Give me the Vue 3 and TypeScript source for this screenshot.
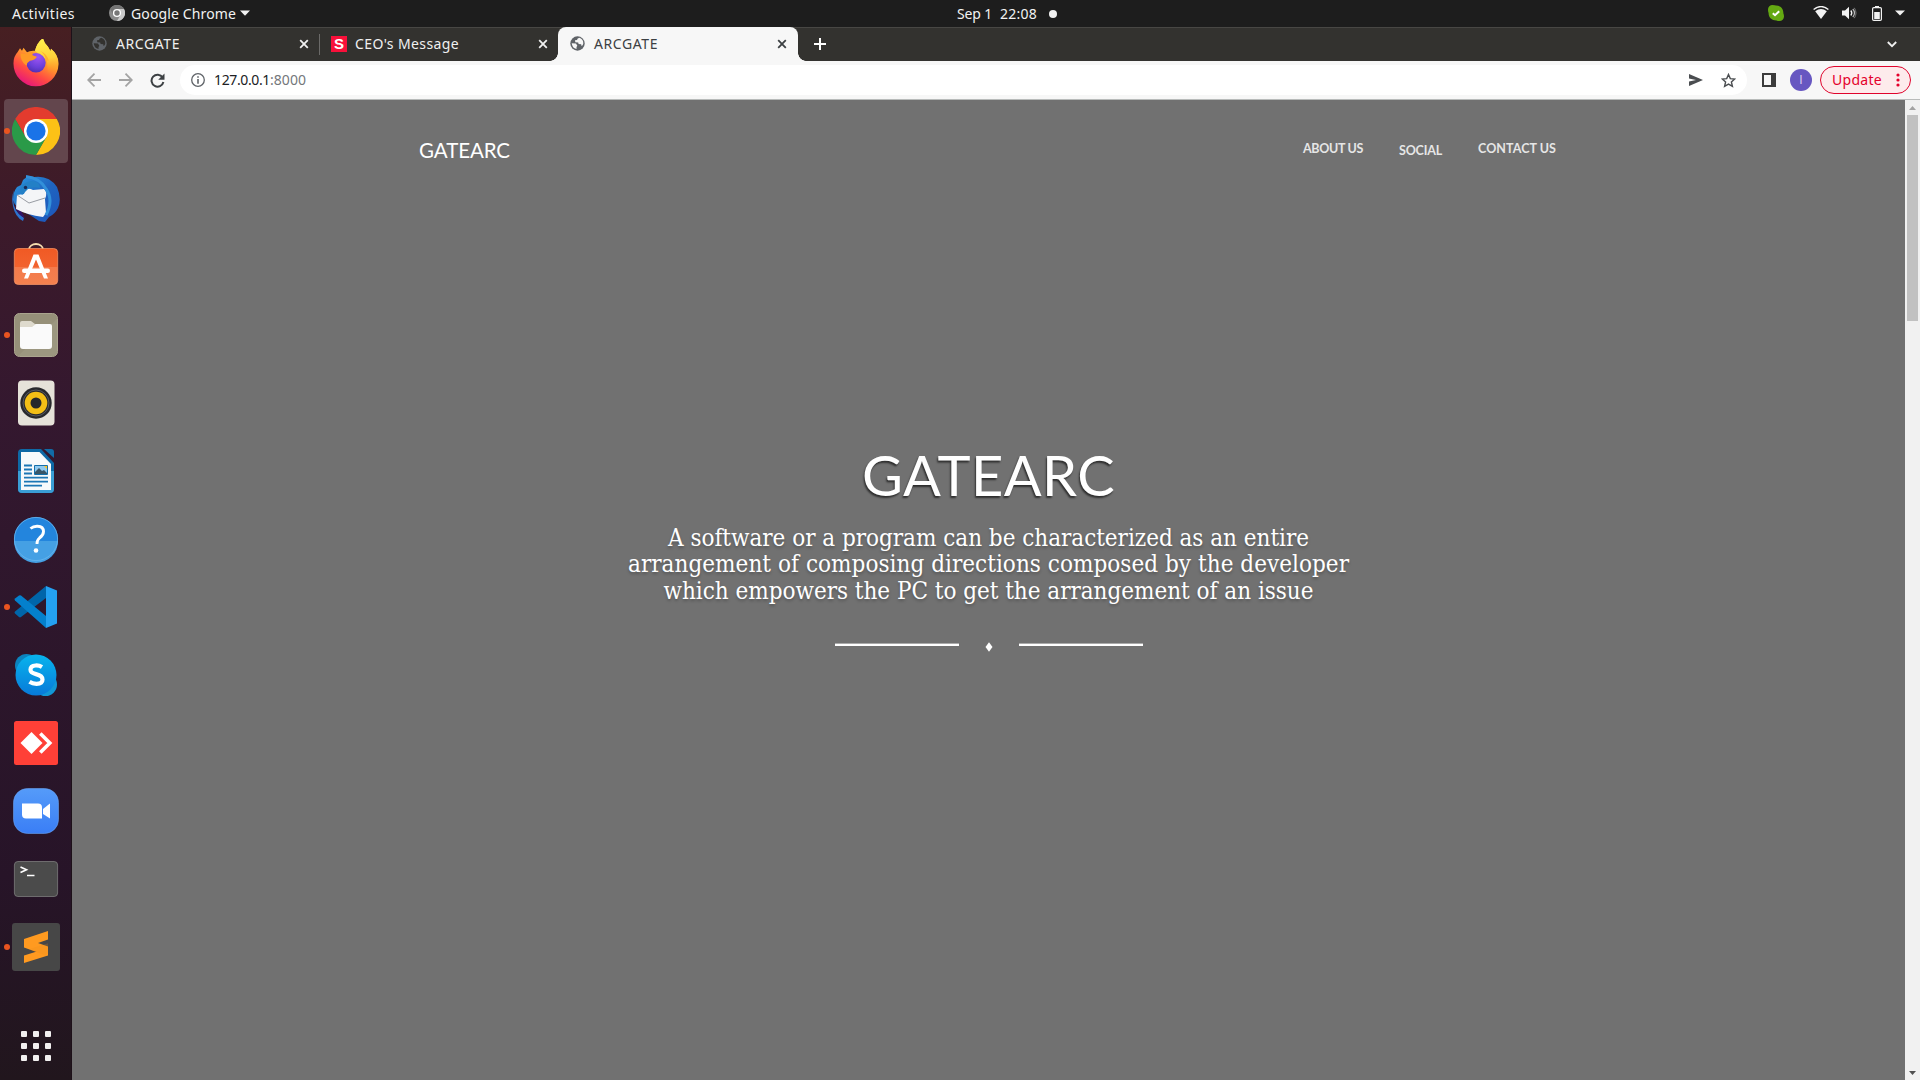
<script setup lang="ts">
import type { Directive } from 'vue'

interface Tab {
  title: string
  icon: 'globe' | 's'
  width: number
  titleWidth: number
  active?: boolean
}

const tabs: Tab[] = [
  { title: 'ARCGATE', icon: 'globe', width: 247, titleWidth: 64 },
  { title: "CEO's Message", icon: 's', width: 239, titleWidth: 104 },
  { title: 'ARCGATE', icon: 'globe', width: 240, titleWidth: 64, active: true },
]

const apps: { name: string; running?: boolean; focused?: boolean }[] = [
  { name: 'firefox' },
  { name: 'chrome', running: true, focused: true },
  { name: 'thunderbird' },
  { name: 'software' },
  { name: 'files', running: true },
  { name: 'rhythmbox' },
  { name: 'writer' },
  { name: 'help' },
  { name: 'vscode', running: true },
  { name: 'skype' },
  { name: 'anydesk' },
  { name: 'zoom' },
  { name: 'terminal' },
  { name: 'sublime', running: true },
]

const links = [
  { label: 'ABOUT US', width: 60 },
  { label: 'SOCIAL', width: 43, low: true },
  { label: 'CONTACT US', width: 78 },
]

const lines = [
  { text: 'A software or a program can be characterized as an entire', width: 641 },
  { text: 'arrangement of composing directions composed by the developer', width: 721 },
  { text: 'which empowers the PC to get the arrangement of an issue', width: 650 },
]

const cells = [0, 1, 2, 3, 4, 5, 6, 7, 8]

// Tracks a label so that it fills the given width in pixels.
const vFit: Directive<HTMLElement, number> = {
  mounted(el, { value }) {
    const natural = el.getBoundingClientRect().width
    const count = (el.textContent ?? '').length || 1
    el.style.letterSpacing = `${(value - natural) / count}px`
  },
}
</script>

<template>
  <div class="desktop">
    <header class="topbar">
      <span v-fit="63" class="t activities">Activities</span>
      <svg class="app-icon" width="16" height="16" viewBox="0 0 16 16">
        <circle cx="8" cy="8" r="8" fill="#8b8b8b" />
        <path d="M8 4h7A8 8 0 0 1 8 16l3.5-6z" fill="#c9c9c9" />
        <path d="M1 4a8 8 0 0 1 14 0H8L4.5 10z" fill="#757575" />
        <circle cx="8" cy="8" r="3.4" fill="#777" stroke="#fff" stroke-width="1.4" />
      </svg>
      <span v-fit="105" class="t app-name">Google Chrome</span>
      <svg class="app-caret" width="10" height="6" viewBox="0 0 10 6"><path d="M0 .5h10L5 5.7z" fill="#f2f2f2" /></svg>
      <span v-fit="35" class="t date">Sep 1</span>
      <span v-fit="37" class="t clock">22:08</span>
      <i class="notice"></i>
      <svg class="tray-skype" width="16" height="16" viewBox="0 0 16 16">
        <path d="M4.5 0Q7 0 8 .5C13 .5 15.5 4 15.4 8.500Q16 9.500 16 11.500A4.500 4.500 0 0 1 11.500 16Q9.500 16 8.500 15.400C4 15.500.500 12.500.600 8Q0 6.500 0 4.500A4.500 4.500 0 0 1 4.500 0z" fill="#64a912" />
        <path d="M4.800 8.200l2.200 2 4.200-4" fill="none" stroke="#fff" stroke-width="2" />
      </svg>
      <svg class="tray-wifi" width="16" height="14" viewBox="0 0 16 14">
        <path d="M.6 3.600Q8-2.600 15.400 3.600" fill="none" stroke="#f2f2f2" stroke-width="1.300" />
        <path d="M2.200 5.200Q8 .800 13.800 5.200L8 13z" fill="#f2f2f2" />
      </svg>
      <svg class="tray-sound" width="15" height="14" viewBox="0 0 15 14">
        <path d="M0 4.500h3L7 .800v12.400L3 9.500H0z" fill="#f2f2f2" />
        <path d="M8.800 4.500q2 2.500 0 5" fill="none" stroke="#f2f2f2" stroke-width="1.300" />
        <path d="M10.800 3q3.400 4 0 8" fill="none" stroke="#bbb" stroke-width="1.200" />
        <path d="M12.300 1.800q3.400 5.200 0 10.400" fill="none" stroke="#777" stroke-width="1" />
      </svg>
      <svg class="tray-battery" width="10" height="15" viewBox="0 0 10 15">
        <path d="M3 0h4v2H3z" fill="#f2f2f2" />
        <rect x=".6" y="1.600" width="8.800" height="12.800" rx="1.200" fill="none" stroke="#f2f2f2" stroke-width="1.200" />
        <path d="M2.200 6h5.600v7H2.200z" fill="#f2f2f2" />
      </svg>
      <svg class="tray-caret" width="10" height="6" viewBox="0 0 10 6"><path d="M0 .5h10L5 5.500z" fill="#f2f2f2" /></svg>
    </header>

    <div class="workspace">
      <nav class="dock">
        <div v-for="app in apps" :key="app.name" class="slot" :class="{ focused: app.focused }">
          <i v-if="app.running" class="running"></i>
          <svg width="48" height="48" viewBox="0 0 48 48">
            <template v-if="app.name === 'firefox'">
              <defs>
                <linearGradient id="ff-body" x1=".8" y1=".1" x2=".3" y2="1">
                  <stop offset="0" stop-color="#ffe14a" /><stop offset=".4" stop-color="#ff9a2b" />
                  <stop offset=".7" stop-color="#ff4a43" /><stop offset="1" stop-color="#e5147e" />
                </linearGradient>
                <linearGradient id="ff-tail" x1=".5" y1="0" x2=".6" y2="1">
                  <stop offset="0" stop-color="#fff04c" /><stop offset=".55" stop-color="#ffd03a" /><stop offset="1" stop-color="#ff8a20" stop-opacity="0" />
                </linearGradient>
                <radialGradient id="ff-globe" cx=".6" cy=".2" r=".9">
                  <stop offset="0" stop-color="#a055f5" /><stop offset=".6" stop-color="#6a3fd8" /><stop offset="1" stop-color="#4b2aa8" />
                </radialGradient>
              </defs>
              <g transform="translate(0 -.7)">
                <path d="M5.500 14L8 10l2 2.500 1.500-3 3.500 4.500q3-2 8-1.500Q25 4 31 0q1 5 5 8.500l2.500 4.500.5-2.500Q47 17 46.500 26A22.500 22.500 0 0 1 1.500 25Q1.500 18 5.500 14z" fill="url(#ff-body)" />
                <path d="M23 12.500Q25 4 31 0q1 5 5 8.500l2.500 4.500.5-2.500Q47 17 46 28q-3 8-10 8l-1-14z" fill="url(#ff-tail)" />
                <circle cx="24" cy="24.500" r="9.700" fill="url(#ff-globe)" />
                <path d="M8.500 15l6 1q3-3 7-2.500-1.500 2-1 3.500l4.500 1.500q-2 3.500-7 4-3 1.500-3.500 5Q8 23 8.500 15z" fill="#ff9a26" />
                <path d="M28 12.500q5 3 5.800 9.500l3 1q-1-7-8.800-10.500z" fill="#ffb12d" />
              </g>
            </template>
            <template v-else-if="app.name === 'chrome'">
              <path d="M3.200 12a24 24 0 0 1 41.600 0H24L13.600 30z" fill="#e33b2e" />
              <path d="M44.800 12A24 24 0 0 1 24 48l10.400-18L24 12z" fill="#fcc116" />
              <path d="M24 48A24 24 0 0 1 3.200 12l10.400 18h20.800z" fill="#2a9a48" />
              <circle cx="24" cy="24" r="12" fill="#fff" />
              <circle cx="24" cy="24" r="9.600" fill="#1a73e8" />
            </template>
            <template v-else-if="app.name === 'thunderbird'">
              <defs>
                <linearGradient id="tb" x1="0" y1="0" x2="1" y2="1">
                  <stop offset="0" stop-color="#2c9ae0" /><stop offset=".5" stop-color="#1f64c0" /><stop offset="1" stop-color="#1d55ba" />
                </linearGradient>
              </defs>
              <path d="M2 15Q-2 35 12 43l-1 3Q3 42 1 31-1 22 2 15z" fill="#2c73d0" />
              <path d="M11 5Q16 0 22 2q15-2 23 10 5 12 1 21-3 6-9 9l-4 5-6-1-9-6Q3 34 1 25q0-8 4-13l4-2z" fill="url(#tb)" />
              <path d="M3 30q2 10 10 13l-4-7z" fill="#32156b" />
              <path d="M5 20l7-1q2-8 9-4l11-1q4 3 1 10l1 14-3 4Q15 40 4 34z" fill="#f4f5f7" />
              <path d="M5 20l12 8 16-5" fill="none" stroke="#989ca3" stroke-width="1" />
              <path d="M8 17Q8 8 19 6q9 0 9 7-8-2-12 1l-6 6z" fill="#2380c6" />
              <path d="M14 1.500Q28 3 34 14q8 11 0 26" fill="none" stroke="#3290da" stroke-width="3" />
              <circle cx="13.500" cy="12.500" r="1.700" fill="#172957" />
            </template>
            <template v-else-if="app.name === 'software'">
              <defs>
                <linearGradient id="sw" x1="0" y1="0" x2="0" y2="1">
                  <stop offset="0" stop-color="#f05a24" /><stop offset=".5" stop-color="#f2622e" /><stop offset=".51" stop-color="#f47a4b" /><stop offset="1" stop-color="#f3814f" />
                </linearGradient>
              </defs>
              <g transform="translate(0 -.5)">
                <path d="M17 7a7 5.500 0 0 1 14 0" fill="none" stroke="#f4dcae" stroke-width="1.800" />
                <rect x="2.300" y="6" width="43.400" height="36" rx="4" fill="url(#sw)" stroke="#fa9868" stroke-width=".7" />
                <path d="M12 36l9.500-24h5L36 36h-4L24 17l-8 19z" fill="#fff" />
                <rect x="10" y="26" width="28" height="4.500" rx="2.200" fill="#fff" />
              </g>
            </template>
            <template v-else-if="app.name === 'files'">
              <rect x="2.500" y="2.500" width="43" height="43" rx="5" fill="#969079" stroke="#aaa48e" />
              <path d="M45 8v32q0 5-5 5H6z" fill="#a29c86" opacity=".55" />
              <path d="M8 12q0-2 2-2h9l4 3h13q2 0 2 2v8H8z" fill="#dedacd" />
              <path d="M8 16h12l4-3h14q2 0 2 2v20q0 3-3 3H11q-3 0-3-3z" fill="#fafafa" />
            </template>
            <template v-else-if="app.name === 'rhythmbox'">
              <rect x="6" y="1.500" width="36.500" height="45" rx="4" fill="#e5e2d9" />
              <circle cx="24" cy="24" r="15.700" fill="#28292d" />
              <circle cx="24" cy="24" r="13" fill="none" stroke="#575b61" />
              <circle cx="24" cy="24" r="11.300" fill="#f3bf16" />
              <circle cx="24" cy="24" r="5.500" fill="#24272b" />
            </template>
            <template v-else-if="app.name === 'writer'">
              <path d="M10 2h19l13 14v26q0 4-4 4H10q-4 0-4-4V6q0-4 4-4z" fill="#0e69a5" />
              <path d="M6 24h36v18q0 4-4 4H10q-4 0-4-4z" fill="#3a9ed5" />
              <path d="M9 5h18.500L39 17v26H9z" fill="#f7fafb" />
              <path d="M32 2h7q3 0 3 3v6z" fill="#116ca7" />
              <path d="M12 18.500h8M12 22.500h8M12 26.500h8M12 30.700h24M12 34.700h24M12 38.700h18" stroke="#1c77b5" stroke-width="1.800" />
              <path d="M22.500 18.500h13v9h-13z" fill="#8fcaf0" stroke="#146fa9" />
              <path d="M32 19h3v3z" fill="#ffc424" />
              <path d="M23 27v-2l4-4 3 3 2-1 3 3v1z" fill="#385668" />
            </template>
            <template v-else-if="app.name === 'help'">
              <circle cx="24" cy="24" r="22" fill="#2385dd" />
              <path d="M2 26h44a22 22 0 0 1-44 0z" fill="#45a0e4" />
              <circle cx="24" cy="24" r="21.600" fill="none" stroke="#6ab6ed" stroke-width=".8" />
              <path d="M18.500 13.500q3-2.500 7-2.300 6 .300 6 5.300 0 3.500-4 6.500-2.700 2.200-2.500 6" fill="none" stroke="#fff" stroke-width="2.900" />
              <circle cx="24" cy="35.500" r="2.300" fill="#fff" />
            </template>
            <template v-else-if="app.name === 'vscode'">
              <path d="M34 3v12L9 34q-1 .8-2 0l-4-3.500q-1-1 0-2z" fill="#0065a9" />
              <path d="M3 17.500q-1-1 0-2l4-3q1-.7 2 0L34 33v12z" fill="#0480cd" />
              <path d="M34 3l11 4.500v33L34 45z" fill="#24a1f1" />
            </template>
            <template v-else-if="app.name === 'skype'">
              <defs>
                <linearGradient id="sk" x1="0" y1="0" x2="0" y2="1"><stop offset="0" stop-color="#08b4ed" /><stop offset="1" stop-color="#087ad9" /></linearGradient>
              </defs>
              <circle cx="14.500" cy="14.500" r="11.500" fill="#0b83bd" />
              <circle cx="33.500" cy="33.500" r="11.500" fill="#1197d5" />
              <circle cx="24" cy="24" r="20.500" fill="url(#sk)" />
              <path d="M30 16q-3-1.800-6.500-1.500-5 .4-5 4.200 0 3 5.500 4.400 6.500 1.600 6.500 5.400 0 4.300-6 4.300-4 0-7-2" fill="none" stroke="#fff" stroke-width="4.200" />
            </template>
            <template v-else-if="app.name === 'anydesk'">
              <rect x="2" y="2" width="44" height="44" rx="2.500" fill="#ff4037" />
              <path d="M8.500 24L19.500 13l11 11-11 11z" fill="#fff" />
              <path d="M27 14.500L36.500 24 27 33.500" fill="none" stroke="#fff" stroke-width="3.600" transform="translate(1.300)" />
            </template>
            <template v-else-if="app.name === 'zoom'">
              <defs>
                <linearGradient id="zm" x1="0" y1="0" x2="0" y2="1"><stop offset="0" stop-color="#559bf9" /><stop offset="1" stop-color="#3a7ef6" /></linearGradient>
              </defs>
              <rect x="1.500" y="1.500" width="45" height="45" rx="14" fill="url(#zm)" stroke="#68a1ee" stroke-width=".6" />
              <path d="M10 16.500h16q4 0 4 4v11H14q-4 0-4-4z" fill="#fff" />
              <path d="M31 22l7-5.500v15L31 27z" fill="#fff" />
            </template>
            <template v-else-if="app.name === 'terminal'">
              <rect x="2.400" y="6.500" width="43.200" height="35" rx="3.500" fill="#4b4b4b" stroke="#7c7c7c" stroke-width=".8" />
              <path d="M8.500 12l6 2.700-6 2.700" fill="none" stroke="#fff" stroke-width="1.600" />
              <path d="M15 20.500h7.500" stroke="#fff" stroke-width="1.500" />
            </template>
            <template v-else>
              <rect width="48" height="48" rx="3" fill="#474747" />
              <path d="M12 32.500L36 25v7.500L12 40z" fill="#ff9a20" />
              <path d="M12 16L36 8v8.500l-10 3.500 10 3.500V31l-3 1-21-7.500z" fill="#ff9a20" />
              <path d="M17 26.300l19-6V31l-3 1z" fill="#e98b1b" opacity=".22" />
            </template>
          </svg>
        </div>
        <div class="launcher"><i v-for="c in cells" :key="c"></i></div>
      </nav>

      <main class="browser">
        <div class="tabstrip">
          <div
            v-for="(tab, i) in tabs"
            :key="i"
            class="tab"
            :class="{ active: tab.active, divided: i === 0 }"
            :style="{ width: tab.width + 'px' }"
          >
            <svg v-if="tab.icon === 'globe'" class="fav" width="15" height="15" viewBox="0 0 15 15">
              <circle cx="7.500" cy="7.500" r="7.200" fill="#5f6368" />
              <path class="land" d="M9.500 1.800Q7.200 2.300 7 4l-2 .3.300 2 2.900.2.400 1.600 2.600.2.300 1.700q1.400-.5 1.800-2.500.200-4-3.800-5.700zM1.700 7.200l4.300.4 1.300 2.200-.8 1.300v2Q2.200 12 1.700 7.200z" />
            </svg>
            <span v-else class="fav s-icon">S</span>
            <span v-fit="tab.titleWidth" class="t title">{{ tab.title }}</span>
            <svg class="close" width="10" height="10" viewBox="0 0 10 10"><path d="M1.200 1.200l7.600 7.600m0-7.600L1.200 8.800" stroke="currentColor" stroke-width="1.800" /></svg>
          </div>
          <svg class="plus" width="12" height="12" viewBox="0 0 12 12"><path d="M6 0v12M0 6h12" stroke="#fff" stroke-width="2" /></svg>
          <svg class="chevron" width="10" height="7" viewBox="0 0 10 7"><path d="M.8 1L5 5.200 9.200 1" fill="none" stroke="#f0f0f0" stroke-width="1.800" /></svg>
        </div>

        <div class="toolbar">
          <svg class="back" width="14" height="14" viewBox="0 0 14 14"><path d="M14 7H1.500M7.500.700L1.200 7l6.300 6.300" fill="none" stroke="#a4a4a4" stroke-width="1.800" /></svg>
          <svg class="forward" width="14" height="14" viewBox="0 0 14 14"><path d="M0 7h12.500M6.500.700L12.800 7l-6.300 6.300" fill="none" stroke="#a4a4a4" stroke-width="1.800" /></svg>
          <svg class="reload" width="15" height="15" viewBox="0 0 15 15">
            <path d="M12.600 4.400A6 6 0 1 0 13.400 9" fill="none" stroke="#3c4043" stroke-width="2" />
            <path d="M14.500.500v6.300H8.200z" fill="#3c4043" />
          </svg>
          <div class="omnibox">
            <svg class="info" width="14" height="14" viewBox="0 0 14 14">
              <circle cx="7" cy="7" r="6.300" fill="none" stroke="#5f6368" stroke-width="1.300" />
              <path d="M6.200 3.200h1.600v1.500H6.200zM6.200 6h1.600v4.800H6.200z" fill="#5f6368" />
            </svg>
            <span v-fit="56" class="t host">127.0.0.1</span><span v-fit="36" class="t port">:8000</span>
            <svg class="send" width="14" height="12" viewBox="0 0 14 12"><path d="M0 0l14 6L0 12V7.500L7 6 0 4.500z" fill="#4a4d50" /></svg>
            <svg class="star" width="15" height="15" viewBox="0 0 15 15"><path d="M7.500 1.500l1.800 4.100 4.400.4-3.300 3 1 4.400-3.900-2.300-3.900 2.300 1-4.400-3.300-3 4.400-.4z" fill="none" stroke="#4a4d50" stroke-width="1.400" /></svg>
          </div>
          <svg class="panel" width="14" height="14" viewBox="0 0 14 14"><path d="M0 0h14v14H0zM2 2v10h7V2z" fill="#3c3c3c" fill-rule="evenodd" /></svg>
          <span class="avatar">I</span>
          <div class="update">
            <span v-fit="50" class="t">Update</span>
            <svg width="4" height="14" viewBox="0 0 4 14"><g fill="#e4002b"><circle cx="2" cy="2" r="1.600" /><circle cx="2" cy="7" r="1.600" /><circle cx="2" cy="12" r="1.600" /></g></svg>
          </div>
        </div>

        <div class="viewport">
          <section class="page">
            <div class="sitebar">
              <span v-fit="91" class="t brand">GATEARC</span>
              <div class="links">
                <span v-for="l in links" :key="l.label" v-fit="l.width" class="t link" :class="{ low: l.low }">{{ l.label }}</span>
              </div>
            </div>
            <div class="hero">
              <h1 v-fit="253" class="t">GATEARC</h1>
              <div class="lead">
                <div v-for="l in lines" :key="l.text" class="line"><span v-fit="l.width" class="t">{{ l.text }}</span></div>
              </div>
              <div class="divider">
                <i></i>
                <svg width="8" height="10" viewBox="0 0 8 10"><path d="M4 .300L7.500 5 4 9.700.500 5z" fill="#fff" /></svg>
                <i></i>
              </div>
            </div>
          </section>
          <div class="scrollbar">
            <svg width="7" height="4" viewBox="0 0 7 4"><path d="M0 4l3.500-4L7 4z" fill="#a3a3a3" /></svg>
            <i class="thumb"></i>
            <svg width="7" height="4" viewBox="0 0 7 4"><path d="M0 0l3.500 4L7 0z" fill="#505050" /></svg>
          </div>
        </div>
      </main>
    </div>
  </div>
</template>

<style>
body {
  margin: 0;
  overflow: hidden;
}
</style>

<style scoped>
.desktop {
  width: 1920px;
  height: 1080px;
  display: flex;
  flex-direction: column;
  overflow: hidden;
  font-family: 'Noto Sans', 'Open Sans', sans-serif;
  font-size: 14px;
  background: #717171;
}
svg,
i {
  display: block;
  flex: none;
}
.t {
  display: inline-block;
  white-space: nowrap;
  flex: none;
}

/* System bar */
.topbar {
  height: 27px;
  display: flex;
  align-items: center;
  background: #1d1d1d;
  color: #f2f2f2;
  line-height: 26px;
  flex: none;
}
.activities { margin-left: 12px; }
.app-icon { margin-left: 34px; }
.app-name { margin-left: 6px; }
.app-caret { margin-left: 4px; }
.date { margin-left: 707px; }
.clock { margin-left: 8px; }
.notice {
  width: 8px;
  height: 8px;
  margin-left: 12px;
  border-radius: 50%;
  background: #f2f2f2;
}
.tray-skype { margin-left: auto; }
.tray-wifi { margin-left: 29px; }
.tray-sound { margin-left: 13px; }
.tray-battery { margin-left: 15px; }
.tray-caret { margin: 0 15px 0 13px; }
.topbar svg { margin-bottom: 1px; }

.workspace {
  flex: 1;
  display: flex;
  min-height: 0;
}

/* Dock */
.dock {
  width: 71px;
  flex: none;
  border-right: 1px solid #1d1119;
  padding-top: 2px;
  background: linear-gradient(#471f22 0, #3c1a2a 190px, #34182f 380px, #2c162b 640px, #271428 850px, #21161d 1053px);
}
.slot {
  position: relative;
  width: 64px;
  height: 64px;
  margin: 2px 4px 4px;
  border-radius: 4px;
  display: flex;
  align-items: center;
  justify-content: center;
}
.focused { background: #63464d; }
.running {
  position: absolute;
  left: 0;
  top: 29px;
  width: 6px;
  height: 6px;
  border-radius: 50%;
  background: #e95420;
}
.launcher {
  display: grid;
  grid-template-columns: repeat(3, 6px);
  gap: 6px;
  margin: 52px 0 0 21px;
}
.launcher i {
  height: 6px;
  border-radius: 1px;
  background: #f2f0f0;
}

/* Browser window */
.browser {
  flex: 1;
  display: flex;
  flex-direction: column;
  min-width: 0;
}
.tabstrip {
  height: 33px;
  border-top: 1px solid #484744;
  display: flex;
  align-items: center;
  background: #33322f;
  flex: none;
}
.tab {
  position: relative;
  height: 33px;
  display: flex;
  align-items: center;
  box-sizing: border-box;
  padding: 0 11px 2px 11px;
  color: #f0f0f0;
}
.tab:first-child { padding: 0 10px 2px 20px; }
.tab.active {
  height: 34px;
  margin-top: -1px;
  padding: 0 11px 1px 12px;
  background: #f7f7f7;
  color: #3c4043;
  border-radius: 8px 8px 0 0;
}
.tab.active::before,
.tab.active::after {
  content: '';
  position: absolute;
  bottom: 0;
  width: 8px;
  height: 8px;
}
.tab.active::before {
  left: -8px;
  background: radial-gradient(circle at 0 0, transparent 7.5px, #f7f7f7 8px);
}
.tab.active::after {
  right: -8px;
  background: radial-gradient(circle at 100% 0, transparent 7.5px, #f7f7f7 8px);
}
.divided::after {
  content: '';
  position: absolute;
  right: -1px;
  top: 6px;
  width: 1px;
  height: 21px;
  background: #6b6a68;
}
.land { fill: #33322f; }
.active .land { fill: #f7f7f7; }
.s-icon {
  width: 16px;
  height: 16px;
  margin-left: 1px;
  background: #f8103a;
  color: #fff;
  font: bold 15px/16px 'Liberation Sans', sans-serif;
  text-align: center;
}
.title { margin-left: 9px; }
.s-icon + .title { margin-left: 8px; }
.close { margin-left: auto; }
.tab:nth-child(2) .close { margin-right: -1px; }
.plus { margin: 0 0 1px 16px; }
.chevron { margin: 0 23px 1px auto; }

.toolbar {
  height: 38px;
  flex: none;
  display: flex;
  align-items: center;
  background: #f7f7f7;
  border-bottom: 1px solid #b8bbba;
}
.back { margin-left: 15px; }
.forward { margin-left: 18px; }
.reload { margin-left: 17px; }
.omnibox {
  width: 1567px;
  height: 30px;
  margin-left: 15px;
  border-radius: 15px;
  display: flex;
  align-items: center;
  background: #fff;
}
.info { margin-left: 11px; }
.host { margin: 0 0 2px 9px; color: #202124; }
.port { margin-bottom: 2px; color: #74777b; }
.send { margin-left: auto; }
.star { margin: 0 11px 0 18px; }
.panel { margin-left: 15px; }
.avatar {
  width: 22px;
  height: 22px;
  margin-left: 14px;
  border-radius: 50%;
  background: #6757c1;
  color: #e2def5;
  font-size: 12px;
  line-height: 21px;
  text-align: center;
  font-family: 'Open Sans', sans-serif;
}
.update {
  width: 91px;
  height: 28px;
  margin-left: 8px;
  box-sizing: border-box;
  border: 1px solid #e0042d;
  border-radius: 14px;
  background: #fdebec;
  color: #e4002b;
  display: flex;
  align-items: center;
  justify-content: space-between;
  padding: 0 10px 0 11px;
}
.update .t { margin-bottom: 2px; }

/* Page */
.viewport {
  flex: 1;
  display: flex;
  min-height: 0;
}
.page {
  flex: 1;
  background: #717171;
  color: #fff;
  font-family: Lato, 'Open Sans', sans-serif;
}
.sitebar {
  width: 1138px;
  height: 101px;
  margin: 0 0 0 346px;
  display: flex;
  align-items: center;
  justify-content: space-between;
}
.brand {
  margin: 0 0 1px 1px;
  font-size: 20.5px;
  line-height: 24px;
}
.links {
  display: flex;
  gap: 36px;
  margin-top: -2px;
}
.link {
  font-size: 12.5px;
  line-height: 16px;
  font-weight: 700;
  color: #e6e6e6;
}
.low { margin-top: 2px; }
.hero {
  display: flex;
  flex-direction: column;
  align-items: center;
  margin-top: 241px;
}
h1 {
  margin: 0;
  font-size: 56px;
  font-weight: 400;
  line-height: 66px;
  text-shadow: -1px 2px 2px rgba(0, 0, 0, 0.6);
}
.lead {
  margin-top: 17px;
  font-family: 'DejaVu Serif Condensed', 'DejaVu Serif', serif;
  font-stretch: condensed;
  font-size: 24px;
  line-height: 26.4px;
  text-shadow: 0 2px 3px rgba(0, 0, 0, 0.25);
}
.line {
  height: 26.4px;
  text-align: center;
}
.divider {
  display: flex;
  align-items: center;
  gap: 26px;
  margin-top: 38px;
}
.divider i {
  width: 124px;
  height: 2px;
  margin-top: -5px;
  background: #fff;
  border-top: 1px solid #aaa;
}

.scrollbar {
  width: 15px;
  display: flex;
  flex-direction: column;
  align-items: center;
  background: #f1f1f1;
  padding: 6px 0 5px;
  box-sizing: border-box;
}
.thumb {
  width: 11px;
  height: 206px;
  margin-top: 5px;
  margin-bottom: auto;
  background: #c1c1c1;
}
</style>
